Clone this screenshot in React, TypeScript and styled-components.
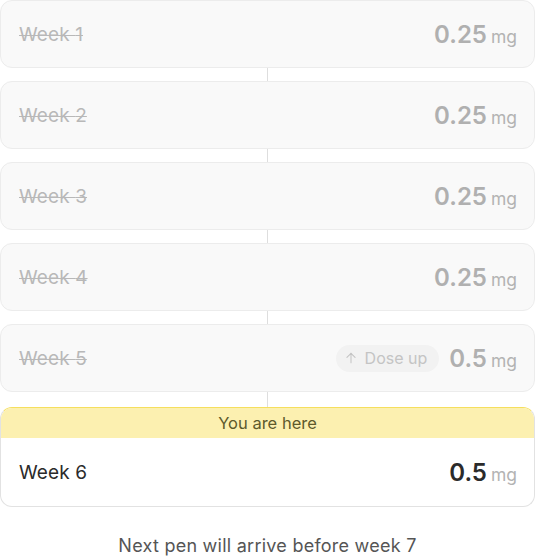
import styled, { createGlobalStyle } from "styled-components";

const GlobalStyle = createGlobalStyle`
  body {
    margin: 0;
    background: #fff;
    font-family: Inter, "Noto Sans", sans-serif;
  }
`;

const Page = styled.main`
  width: 535px;
  display: flex;
  flex-direction: column;
`;

const Card = styled.div<{ $current?: boolean }>`
  box-sizing: border-box;
  border: 1px solid ${(p) => (p.$current ? "#e2e2e2" : "#ececec")};
  border-radius: 12px;
  background: ${(p) => (p.$current ? "#fff" : "#f9f9f9")};
  overflow: hidden;
  ${(p) => p.$current && "border-top-color: #f5df5e;"}
`;

const Banner = styled.div`
  height: 30px;
  background: #fcf0b0;
  color: #5e5a2c;
  font-size: 16.5px;
  display: flex;
  align-items: center;
  justify-content: center;
`;

const Row = styled.div<{ $current?: boolean }>`
  height: ${(p) => (p.$current ? "68px" : "66px")};
  padding: 0 17px 0 18px;
  display: flex;
  align-items: center;
  justify-content: space-between;
`;

const WeekLabel = styled.span<{ $done?: boolean }>`
  font-size: 19px;
  letter-spacing: 0.1px;
  color: ${(p) => (p.$done ? "#b8b8b8" : "#2b2b2b")};
  text-decoration: ${(p) => (p.$done ? "line-through" : "none")};
  text-decoration-thickness: 1px;
`;

const Right = styled.div`
  display: flex;
  align-items: center;
  gap: 10px;
`;

const Dose = styled.span<{ $done?: boolean }>`
  display: flex;
  align-items: baseline;
  gap: 4px;
  color: ${(p) => (p.$done ? "#b0b0b0" : "#2b2b2b")};
`;

const Amount = styled.span`
  font-size: 24px;
  font-weight: 600;
  letter-spacing: 0px;
`;

const Unit = styled.span`
  font-size: 17.5px;
  color: #b3b3b3;
`;

const Pill = styled.span`
  display: flex;
  align-items: center;
  gap: 7px;
  height: 27px;
  padding: 0 12px 0 8px;
  border-radius: 14px;
  background: #f2f2f2;
  color: #c4c4c4;
  font-size: 16px;
`;

const Connector = styled.div<{ $long?: boolean }>`
  width: 1px;
  height: ${(p) => (p.$long ? "15px" : "13px")};
  margin: 0 auto;
  background: #dedede;
`;

const Footer = styled.p`
  margin: 28px 0 0;
  text-align: center;
  font-size: 18px;
  letter-spacing: 0.25px;
  color: #555;
`;

type Week = { n: number; dose: string; up?: boolean };

const weeks: Week[] = [
  { n: 1, dose: "0.25" },
  { n: 2, dose: "0.25" },
  { n: 3, dose: "0.25" },
  { n: 4, dose: "0.25" },
  { n: 5, dose: "0.5", up: true },
];

const ArrowUp = () => (
  <svg width="14" height="14" viewBox="0 0 24 24" fill="none" stroke="currentColor" strokeWidth="1.8" strokeLinecap="round" strokeLinejoin="round">
    <path d="M12 20V4" />
    <path d="M5 11l7-7 7 7" />
  </svg>
);

export default function App() {
  return (
    <Page>
      <GlobalStyle />
      {weeks.map((w, i) => (
        <div key={w.n}>
          <Card>
            <Row>
              <WeekLabel $done>Week {w.n}</WeekLabel>
              <Right>
                {w.up && (
                  <Pill>
                    <ArrowUp />
                    Dose up
                  </Pill>
                )}
                <Dose $done>
                  <Amount>{w.dose}</Amount>
                  <Unit>mg</Unit>
                </Dose>
              </Right>
            </Row>
          </Card>
          <Connector $long={i === weeks.length - 1} />
        </div>
      ))}
      <Card $current>
        <Banner>You are here</Banner>
        <Row $current>
          <WeekLabel>Week 6</WeekLabel>
          <Dose>
            <Amount>0.5</Amount>
            <Unit>mg</Unit>
          </Dose>
        </Row>
      </Card>
      <Footer>Next pen will arrive before week 7</Footer>
    </Page>
  );
}
